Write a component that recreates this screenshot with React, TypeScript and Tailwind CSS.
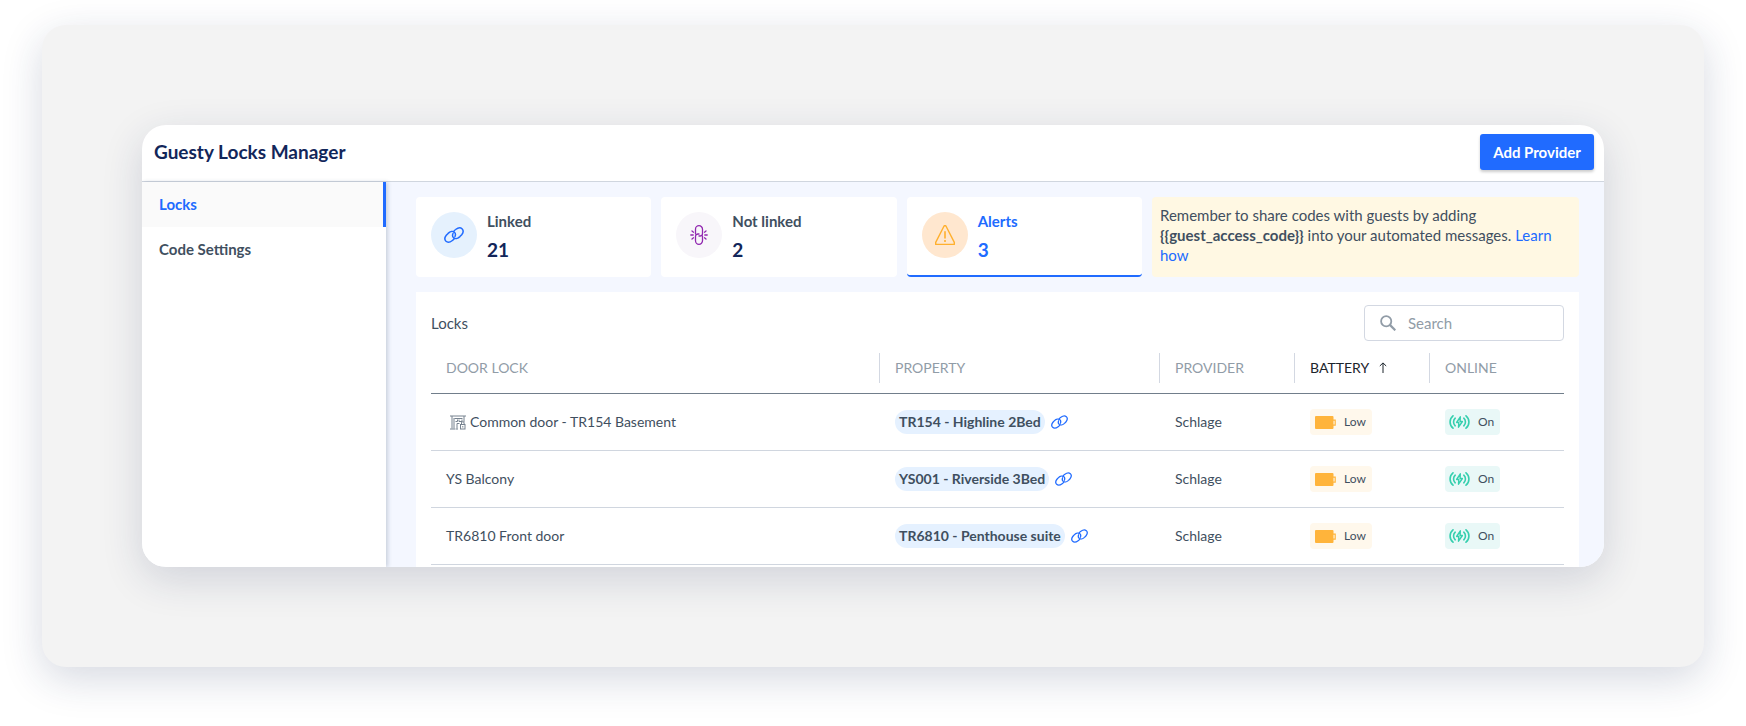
import type { ReactNode } from 'react';
import clsx from 'clsx';

interface Lock {
  name: string;
  property: string;
  provider: string;
  battery: string;
  online: string;
  common?: boolean;
}

const locks: Lock[] = [
  {
    name: 'Common door - TR154 Basement',
    property: 'TR154 - Highline 2Bed',
    provider: 'Schlage',
    battery: 'Low',
    online: 'On',
    common: true,
  },
  { name: 'YS Balcony', property: 'YS001 - Riverside 3Bed', provider: 'Schlage', battery: 'Low', online: 'On' },
  { name: 'TR6810 Front door', property: 'TR6810 - Penthouse suite', provider: 'Schlage', battery: 'Low', online: 'On' },
];

const LinkIcon = ({ className }: { className?: string }) => (
  <svg viewBox="0 0 20 16" fill="none" stroke="currentColor" strokeWidth="1.5" strokeLinecap="round" className={className}>
    <path d="M10.6 11.2c-.5.9-1.300 1.700-2.200 2.300-2.300 1.700-5 2-6.400.8C.6 12.900.7 10.300 2.300 8.300l1.800-1.900C6 4.500 8.900 3.900 10.400 5.200c1.200 1.100 1.300 2.700.6 4.300" />
    <path d="M9.400 4.800c.5-.9 1.300-1.700 2.200-2.300 2.300-1.700 5-2 6.400-.8 1.400 1.400 1.300 4-.3 6l-1.800 1.900c-1.900 1.900-4.800 2.500-6.300 1.200C8.400 9.700 8.300 8.100 9 6.500" />
  </svg>
);

const BrokenLinkIcon = () => (
  <svg viewBox="0 0 18 20" fill="none" stroke="currentColor" strokeLinecap="round" strokeWidth="1.300" className="h-5 w-[18px]">
    <path d="M5.500 9V4.200a3.500 3.500 0 0 1 7 0v4.300a2.500 2.500 0 0 1-2.500 2.500H9" />
    <path d="M12.500 11v4.800a3.500 3.500 0 0 1-7 0v-4.300A2.500 2.500 0 0 1 8 9h1" />
    <path d="M.8 10h2.400M14.800 10h2.400M2 6l1.500 1.200M2 14l1.500-1.200M16 6l-1.500 1.200M16 14l-1.500-1.200" />
  </svg>
);

const AlertIcon = () => (
  <svg viewBox="0 0 20 20" fill="none" stroke="currentColor" strokeLinejoin="round" className="size-5">
    <path d="M9.200.8h1.600l8.500 16.600v2H.7v-2z" strokeWidth="1.400" />
    <path d="M10 6.200v7.300M10 15v2" strokeWidth="1.600" />
  </svg>
);

const CommonDoorIcon = () => (
  <svg viewBox="0 0 16 15" fill="none" stroke="currentColor" className="h-[15px] w-4 text-[#76828f]">
    <path d="M0 1h16M2 1v12.500M4 3v10.500M0 14h5.500M14 1v6M4.500 3.500h8M5.500 6.500h2v-2M9 4.500v2h3v-2M7 13.500V8.500h2.500M6 14h2" />
    <rect x="10.500" y="9.500" width="4.500" height="4.500" />
    <path d="M11.500 9.500V8a1.300 1.300 0 0 1 2.600 0v1.500M12.800 11v1.500" />
  </svg>
);

const SearchIcon = () => (
  <svg viewBox="0 0 16 16" fill="none" stroke="currentColor" className="size-4 shrink-0 text-[#919ca7]">
    <circle cx="6.200" cy="6.200" r="5.100" strokeWidth="1.800" />
    <path d="m9.900 9.900 5.400 5.400" strokeWidth="2.200" />
  </svg>
);

const SortIcon = () => (
  <svg viewBox="0 0 8 11" fill="none" stroke="currentColor" className="h-[11px] w-2">
    <path d="M4 11V1M.8 4 4 .9 7.200 4" />
  </svg>
);

const BatteryIcon = () => (
  <svg viewBox="0 0 21 13" className="h-[13px] w-[21px] text-[#ffb43b]">
    <rect x="0" y="0" width="18.500" height="13" rx="1" fill="currentColor" />
    <path d="M18 4.200h2.200v5H18" fill="none" stroke="currentColor" strokeWidth="1.200" />
  </svg>
);

const OnlineIcon = () => (
  <svg viewBox="0 0 21 14" fill="none" stroke="currentColor" strokeLinecap="round" strokeLinejoin="round" className="h-3.5 w-[21px] text-[#35cfae]">
    <path d="M4 .8C.1 4 .1 10 4 13.200M6.200 3.200c-2.200 2-2.200 5.600 0 7.600M17 .8c3.900 3.200 3.900 9.200 0 12.400M14.800 3.200c2.200 2 2.200 5.600 0 7.600" strokeWidth="1.600" />
    <path d="M11.300 1.800 7.600 7.500h2.200l-.3 4.700 3.900-5.700h-2.300z" strokeWidth="1.400" />
  </svg>
);

interface StatCardProps {
  label: string;
  value: number;
  icon: ReactNode;
  iconClass: string;
  active?: boolean;
}

function StatCard({ label, value, icon, iconClass, active }: StatCardProps) {
  return (
    <button
      type="button"
      className={clsx(
        'flex h-20 items-start gap-2.5 rounded border-b-2 bg-white px-[15px] pt-[15px] text-left font-bold',
        active ? 'border-[#206bff] text-[#206bff]' : 'border-white'
      )}
    >
      <span className={clsx('flex size-[46px] shrink-0 items-center justify-center rounded-full', iconClass)}>{icon}</span>
      <span className="flex flex-col gap-2">
        <span className="leading-[18px]">{label}</span>
        <span className={clsx('text-[19px] leading-6', !active && 'text-[#12265a]')}>{value}</span>
      </span>
    </button>
  );
}

const headClass = 'h-[50px] border-b border-[#717e8b] px-0 pt-0 pb-0.5 text-left font-normal text-[#919ca7]';
const dividerClass = 'flex h-[30px] items-center border-l border-[#d3d8e2] pl-[15px]';
const cellClass = 'h-[57px] border-b border-[#d0d6df] py-0 pl-4 pr-0';

function LockRow({ lock }: { lock: Lock }) {
  return (
    <tr>
      <td className="h-[57px] border-b border-[#d0d6df] py-0 pl-[15px] pr-0">
        <div className="flex items-center gap-1">
          {lock.common && (
            <span className="pl-1">
              <CommonDoorIcon />
            </span>
          )}
          {lock.name}
        </div>
      </td>
      <td className={cellClass}>
        <div className="flex items-center gap-1.5">
          <span className="rounded-full bg-[#e5f1ff] px-1 leading-6 font-bold">{lock.property}</span>
          <a href="#" aria-label={`Open ${lock.property}`} className="text-[#206bff]">
            <LinkIcon className="h-[14px] w-[17px]" />
          </a>
        </div>
      </td>
      <td className={cellClass}>{lock.provider}</td>
      <td className={cellClass}>
        <span className="inline-flex h-[26px] w-[62px] items-center gap-2 rounded-sm bg-[#fff8ec] pl-[5px] align-middle text-xs">
          <BatteryIcon />
          {lock.battery}
        </span>
      </td>
      <td className={cellClass}>
        <span className="inline-flex h-[26px] w-[55px] items-center gap-2 rounded-sm bg-[#e9f8f7] pl-1 align-middle text-xs">
          <OnlineIcon />
          {lock.online}
        </span>
      </td>
    </tr>
  );
}

export default function App() {
  return (
    <div className="bg-white px-[42px] pt-[25px] pb-[59px] font-['Lato',sans-serif] text-[15px] leading-5 text-[#3f4f60]">
      <div className="rounded-3xl bg-[#f3f3f3] p-[100px] shadow-[0_12px_40px_rgba(30,45,90,0.18)]">
        <main className="overflow-hidden rounded-3xl bg-white shadow-[0_12px_40px_rgba(30,45,90,0.16)]">
          <header className="flex h-[57px] items-center justify-between border-b border-[#d0d6df] pr-2.5 pb-0.5 pl-3">
            <h1 className="text-[19px] font-bold text-[#12265a]">Guesty Locks Manager</h1>
            <button type="button" className="h-9 w-[114px] rounded-[3px] bg-[#206bff] font-bold text-white shadow-[0_2px_3px_rgba(0,0,0,0.2)]">
              Add Provider
            </button>
          </header>

          <div className="flex">
            <nav className="z-10 flex w-[244px] shrink-0 flex-col bg-white font-bold shadow-[2px_0_4px_rgba(40,60,90,0.2)]">
              <a href="#" aria-current="page" className="flex h-[45px] items-center border-r-3 border-[#206bff] bg-[#fafafa] pb-0.5 pl-[17px] text-[#206bff]">
                Locks
              </a>
              <a href="#" className="flex h-[45px] items-center pb-0.5 pl-[17px]">
                Code Settings
              </a>
            </nav>

            <div className="min-w-0 flex-1 bg-[#f4f7ff] pt-[15px] pr-[25px] pl-[30px]">
              <section className="grid grid-cols-[1fr_1fr_1fr_427px] gap-2.5">
                <StatCard
                  label="Linked"
                  value={21}
                  icon={<LinkIcon className="h-4 w-5" />}
                  iconClass="bg-[#e5f1fd] text-[#206bff]"
                />
                <StatCard label="Not linked" value={2} icon={<BrokenLinkIcon />} iconClass="bg-[#f8f6fa] text-[#9128b0]" />
                <StatCard label="Alerts" value={3} icon={<AlertIcon />} iconClass="bg-[#ffe7cf] text-[#ffb02e]" active />
                <p className="rounded bg-[#fff8e3] px-2 pt-2">
                  Remember to share codes with guests by adding <b>{'{{guest_access_code}}'}</b> into your automated messages.{' '}
                  <a href="#" className="text-[#206bff]">
                    Learn how
                  </a>
                </p>
              </section>

              <section className="mt-[15px] bg-white px-[15px] pt-[13px] pb-0.5">
                <div className="mb-[3px] flex items-center justify-between">
                  <h2>Locks</h2>
                  <label className="flex h-9 w-[200px] items-center gap-3 rounded border border-[#d3d8e2] px-[15px]">
                    <SearchIcon />
                    <input type="search" aria-label="Search locks" placeholder="Search" className="w-full min-w-0 outline-none placeholder:text-[#919ca7]" />
                  </label>
                </div>
                <table className="w-full table-fixed border-separate border-spacing-0 text-sm">
                  <colgroup>
                    <col />
                    <col className="w-[280px]" />
                    <col className="w-[135px]" />
                    <col className="w-[135px]" />
                    <col className="w-[135px]" />
                  </colgroup>
                  <thead>
                    <tr>
                      <th className={headClass}>
                        <div className="pl-[15px]">DOOR LOCK</div>
                      </th>
                      <th className={headClass}>
                        <div className={dividerClass}>PROPERTY</div>
                      </th>
                      <th className={headClass}>
                        <div className={dividerClass}>PROVIDER</div>
                      </th>
                      <th className={headClass} aria-sort="ascending">
                        <div className={clsx(dividerClass, 'gap-2.5 text-[#1c242c]')}>
                          BATTERY
                          <SortIcon />
                        </div>
                      </th>
                      <th className={headClass}>
                        <div className={dividerClass}>ONLINE</div>
                      </th>
                    </tr>
                  </thead>
                  <tbody>
                    {locks.map((lock) => (
                      <LockRow key={lock.name} lock={lock} />
                    ))}
                  </tbody>
                </table>
              </section>
            </div>
          </div>
        </main>
      </div>
    </div>
  );
}
